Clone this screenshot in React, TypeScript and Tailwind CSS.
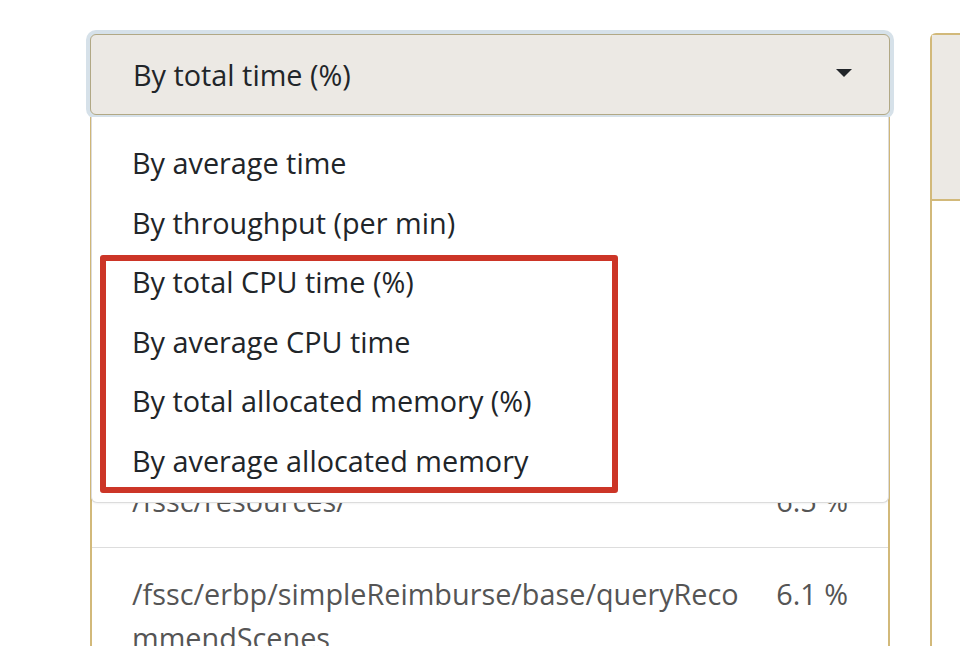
import React from "react";

const items = [
  "By average time",
  "By throughput (per min)",
  "By total CPU time (%)",
  "By average CPU time",
  "By total allocated memory (%)",
  "By average allocated memory",
];

export default function App() {
  return (
    <div
      className="w-[960px] h-[646px] overflow-hidden bg-white flex items-start gap-[40px] pl-[90px] pt-[34px]"
      style={{ fontFamily: '"Open Sans", "Noto Sans", sans-serif' }}
    >
      {/* left column */}
      <div className="relative w-[800px] shrink-0 flex flex-col">
        <div className="h-[81px] rounded-[6px] border-[1.5px] border-[#b1a885] bg-[#ece9e4] ring-4 ring-[#d6e1e9] flex items-center pl-[42px] pr-[37px] text-[28.8px] text-[#212529]">
          <span className="flex-1 leading-none pt-[2px]">By total time (%)</span>
          <svg width="16" height="8" viewBox="0 0 16 8" className="mb-[3px]">
            <path d="M0 0 H16 L8 8 Z" fill="#212529" />
          </svg>
        </div>
        {/* card behind */}
        <div className="mt-[2px] h-[600px] shrink-0 border-x-2 border-[#d2b97a] bg-white flex flex-col text-[28.8px] leading-[44px] text-[#555555]">
          <div className="h-[338px] shrink-0" />
          <div className="flex shrink-0 border-b-[1.5px] border-[#dddddd] py-[24px] pl-[40px] pr-[40px]">
            <div className="flex-1">/fssc/resources/</div>
            <div className="w-[90px] text-right">6.5 %</div>
          </div>
          <div className="flex shrink-0 py-[24px] pl-[40px] pr-[40px]">
            <div className="w-[612px] break-all">/fssc/erbp/simpleReimburse/base/queryRecommendScenes</div>
            <div className="flex-1 text-right">6.1 %</div>
          </div>
        </div>
        {/* dropdown menu */}
        <div className="absolute left-[1px] top-[83px] w-[798px] bg-white border-[1.5px] border-t-0 border-[#dcdcdc] rounded-b-[6px] pt-[16px] pb-[12px] shadow-[0_1px_2px_rgba(0,0,0,0.05)]">
          {items.map((t) => (
            <div key={t} className="h-[59.5px] leading-[59.5px] pl-[40px] text-[28.8px] text-[#212529] whitespace-nowrap">
              {t}
            </div>
          ))}
          <div className="absolute left-[8px] top-[138px] w-[518px] h-[238px] border-[6px] border-[#cc3527] rounded-[3px]" />
        </div>
      </div>
      {/* right card */}
      <div className="w-[200px] shrink-0 h-[640px] -mt-[1px] border-l-2 border-t-2 border-[#d2b97a] rounded-tl-[6px] flex flex-col">
        <div className="h-[166px] bg-[#ece9e4] border-b-2 border-[#d2b97a]" />
        <div className="flex-1 bg-white" />
      </div>
    </div>
  );
}
